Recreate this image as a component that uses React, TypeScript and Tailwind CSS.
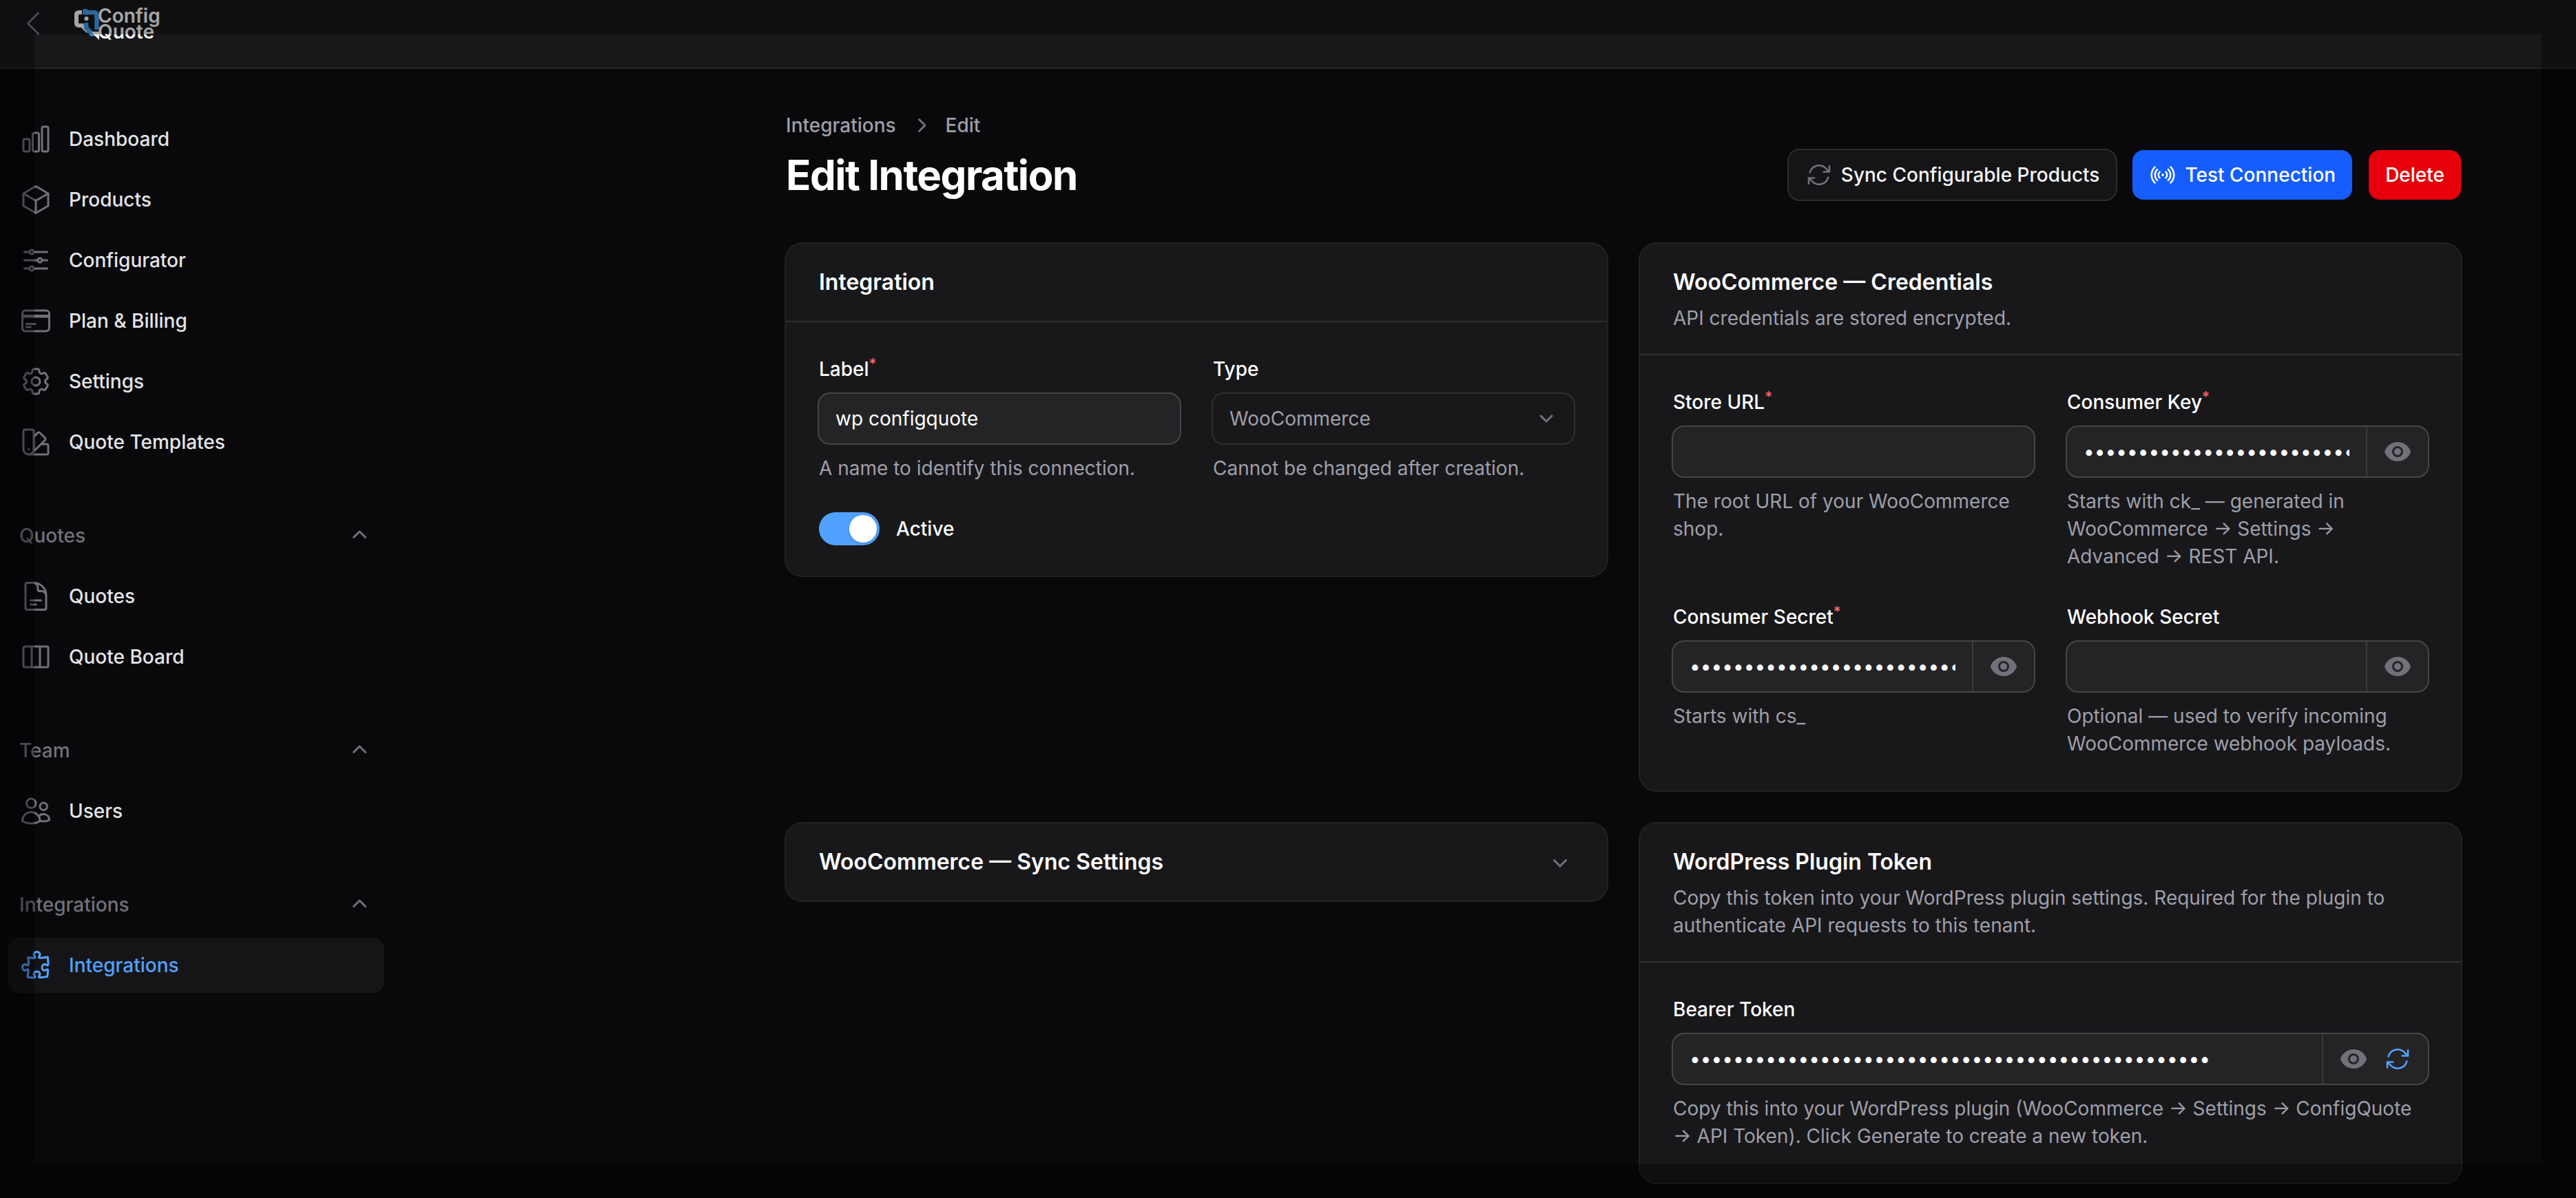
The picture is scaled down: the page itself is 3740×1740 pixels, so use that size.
import React from "react";
import {
  HiOutlineChartBar,
  HiOutlineCube,
  HiOutlineAdjustmentsHorizontal,
  HiOutlineCreditCard,
  HiOutlineCog6Tooth,
  HiOutlineSwatch,
  HiOutlineDocumentText,
  HiOutlineViewColumns,
  HiOutlineUsers,
  HiOutlinePuzzlePiece,
  HiOutlineChevronLeft,
  HiOutlineArrowPath,
  HiOutlineSignal,
  HiMiniChevronUp,
  HiMiniChevronDown,
  HiMiniChevronRight,
  HiMiniEye,
} from "react-icons/hi2";

type IconType = React.ComponentType<{ className?: string }>;

function NavItem({ icon: Icon, label, active }: { icon: IconType; label: string; active?: boolean }) {
  return (
    <a className={`flex h-10 items-center gap-3 rounded-lg px-2 ${active ? "bg-white/5" : ""}`}>
      <Icon className={`size-6 shrink-0 ${active ? "text-blue-400" : "text-zinc-500"}`} />
      <span className={`text-sm font-medium ${active ? "text-blue-400" : "text-zinc-200"}`}>{label}</span>
    </a>
  );
}

function NavGroup({ title, children }: { title: string; children: React.ReactNode }) {
  return (
    <div className="flex flex-col gap-[14px]">
      <div className="flex h-5 items-center justify-between px-2">
        <span className="text-sm font-medium text-zinc-500">{title}</span>
        <HiMiniChevronUp className="size-5 text-zinc-500" />
      </div>
      <div className="flex flex-col gap-1">{children}</div>
    </div>
  );
}

function Logo() {
  return (
    <svg viewBox="0 0 36 45" className="h-[22.5px] w-[18px] shrink-0" fill="none">
      <path d="M11 5H6.5Q3 5 3 8.5V20.5Q3 24 6.5 24H11L20 33" stroke="#ffffff" strokeWidth="6" />
      <circle cx="17.5" cy="14" r="3" fill="#ffffff" />
      <path d="M15.5 0V8.5M15.5 5H28Q32.5 5 32.5 9.5V30" stroke="#459ff0" strokeWidth="6.5" />
      <path d="M17 20V27L25 36H34" stroke="#459ff0" strokeWidth="6.5" />
      <path d="M24 33H36V45Z" fill="#ffffff" />
    </svg>
  );
}

function Label({ text, required }: { text: string; required?: boolean }) {
  return (
    <label className="block text-sm font-medium text-white">
      {text}
      {required && <sup className="font-medium text-red-400">*</sup>}
    </label>
  );
}

function Help({ children }: { children: React.ReactNode }) {
  return <p className="mt-2 text-sm text-zinc-400">{children}</p>;
}

function Card({ title, desc, children }: { title: string; desc?: string; children: React.ReactNode }) {
  return (
    <section className="rounded-xl bg-zinc-900 ring-1 ring-white/10">
      <header className="border-b border-white/10 px-6 py-4">
        <h2 className="text-base font-semibold text-white">{title}</h2>
        {desc && <p className="mt-1 text-sm text-zinc-400">{desc}</p>}
      </header>
      {children}
    </section>
  );
}

function SecretField({
  label,
  required,
  value,
  help,
  extra,
}: {
  label: string;
  required?: boolean;
  value: string;
  help: string;
  extra?: boolean;
}) {
  return (
    <div>
      <Label text={label} required={required} />
      <div className="mt-2 flex h-9 items-center overflow-hidden rounded-lg bg-white/5 ring-1 ring-white/20">
        <input
          type="password"
          readOnly
          value={value}
          className="h-full min-w-0 flex-1 bg-transparent px-3 text-sm text-white outline-none"
        />
        <div className="flex h-full shrink-0 items-center gap-3 border-s border-white/10 px-3">
          <HiMiniEye className="size-5 text-zinc-500" />
          {extra && <HiOutlineArrowPath className="size-5 text-blue-400" />}
        </div>
      </div>
      <Help>{help}</Help>
    </div>
  );
}

const KEY = "ck_0123456789abcdef0123456789abcdef012345";

export default function App() {
  return (
    <div className="relative h-[870px] w-[1870px] overflow-hidden bg-zinc-950 font-['Inter',sans-serif] antialiased [zoom:2]">
      <header className="flex h-[50px] items-start gap-[18px] border-b border-white/5 bg-zinc-900 pl-3 pt-[5px]">
        <HiOutlineChevronLeft className="size-6 text-zinc-500" />
        <div className="flex items-center pt-[1px]">
          <Logo />
          <div className="-ml-[1px] text-[14px] font-semibold leading-[11.5px] text-white">
            <div>Config</div>
            <div>Quote</div>
          </div>
        </div>
      </header>

      <div className="flex">
        <aside className="w-[285px] shrink-0 px-1.5 pt-[31px]">
          <nav className="flex flex-col gap-[38px]">
            <div className="flex flex-col gap-1">
              <NavItem icon={HiOutlineChartBar} label="Dashboard" />
              <NavItem icon={HiOutlineCube} label="Products" />
              <NavItem icon={HiOutlineAdjustmentsHorizontal} label="Configurator" />
              <NavItem icon={HiOutlineCreditCard} label="Plan & Billing" />
              <NavItem icon={HiOutlineCog6Tooth} label="Settings" />
              <NavItem icon={HiOutlineSwatch} label="Quote Templates" />
            </div>
            <NavGroup title="Quotes">
              <NavItem icon={HiOutlineDocumentText} label="Quotes" />
              <NavItem icon={HiOutlineViewColumns} label="Quote Board" />
            </NavGroup>
            <NavGroup title="Team">
              <NavItem icon={HiOutlineUsers} label="Users" />
            </NavGroup>
            <NavGroup title="Integrations">
              <NavItem icon={HiOutlinePuzzlePiece} label="Integrations" active />
            </NavGroup>
          </nav>
        </aside>

        <main className="ml-[285.5px] w-[1216px] pt-[31px]">
          <nav className="flex items-center gap-2 text-sm font-medium text-zinc-400">
            <span>Integrations</span>
            <HiMiniChevronRight className="size-5 text-zinc-500" />
            <span>Edit</span>
          </nav>
          <div className="mt-2 flex items-center justify-between">
            <h1 className="text-3xl font-bold tracking-tight text-white">Edit Integration</h1>
            <div className="flex items-center gap-3 text-sm font-medium text-white">
              <button className="flex h-9 items-center gap-1.5 rounded-lg bg-white/5 px-3 text-zinc-100 ring-1 ring-white/15">
                <HiOutlineArrowPath className="size-5 text-zinc-500" />
                Sync Configurable Products
              </button>
              <button className="flex h-9 items-center gap-1.5 rounded-lg bg-blue-600 px-3">
                <HiOutlineSignal className="size-5" />
                Test Connection
              </button>
              <button className="flex h-9 items-center rounded-lg bg-red-600 px-3">Delete</button>
            </div>
          </div>

          <div className="mt-8 grid grid-cols-2 items-start gap-6">
            <Card title="Integration">
              <div className="p-6 pb-[22px]">
                <div className="grid grid-cols-2 gap-6">
                  <div>
                    <Label text="Label" required />
                    <input
                      readOnly
                      value="wp configquote"
                      className="mt-2 block h-9 w-full rounded-lg bg-white/5 px-3 text-sm text-white outline-none ring-1 ring-white/20"
                    />
                    <Help>A name to identify this connection.</Help>
                  </div>
                  <div>
                    <Label text="Type" />
                    <div className="mt-2 flex h-9 items-center justify-between rounded-lg pl-3 pr-2.5 text-sm text-zinc-400 ring-1 ring-white/10">
                      <span>WooCommerce</span>
                      <svg viewBox="0 0 20 20" className="size-5 text-zinc-500" fill="none">
                        <path d="m6 8 4 4 4-4" stroke="currentColor" strokeWidth="1.5" strokeLinecap="round" strokeLinejoin="round" />
                      </svg>
                    </div>
                    <Help>Cannot be changed after creation.</Help>
                  </div>
                </div>
                <div className="mt-[22px] flex items-center gap-3">
                  <div className="flex h-6 w-11 items-center justify-end rounded-full bg-blue-400 px-0.5">
                    <div className="size-5 rounded-full bg-white shadow" />
                  </div>
                  <span className="text-sm font-medium text-white">Active</span>
                </div>
              </div>
            </Card>

            <Card title="WooCommerce — Credentials" desc="API credentials are stored encrypted.">
              <div className="grid grid-cols-2 gap-6 p-6">
                <div>
                  <Label text="Store URL" required />
                  <div className="mt-2 h-9 rounded-lg bg-white/5 ring-1 ring-white/20" />
                  <Help>The root URL of your WooCommerce shop.</Help>
                </div>
                <SecretField
                  label="Consumer Key"
                  required
                  value={KEY}
                  help="Starts with ck_ — generated in WooCommerce → Settings → Advanced → REST API."
                />
                <SecretField label="Consumer Secret" required value={KEY} help="Starts with cs_" />
                <SecretField
                  label="Webhook Secret"
                  value=""
                  help="Optional — used to verify incoming WooCommerce webhook payloads."
                />
              </div>
            </Card>

            <section className="flex items-center justify-between rounded-xl bg-zinc-900 px-6 py-4 ring-1 ring-white/10">
              <h2 className="text-base font-semibold text-white">WooCommerce — Sync Settings</h2>
              <HiMiniChevronDown className="size-5 text-zinc-500" />
            </section>

            <Card
              title="WordPress Plugin Token"
              desc="Copy this token into your WordPress plugin settings. Required for the plugin to authenticate API requests to this tenant."
            >
              <div className="p-6">
                <SecretField
                  label="Bearer Token"
                  value="0123456789abcdef0123456789abcdef0123456789abcdef"
                  help="Copy this into your WordPress plugin (WooCommerce → Settings → ConfigQuote → API Token). Click Generate to create a new token."
                  extra
                />
              </div>
            </Card>
          </div>
        </main>
      </div>

      <div className="pointer-events-none absolute inset-0 border-[25px] border-black/35" />
    </div>
  );
}
